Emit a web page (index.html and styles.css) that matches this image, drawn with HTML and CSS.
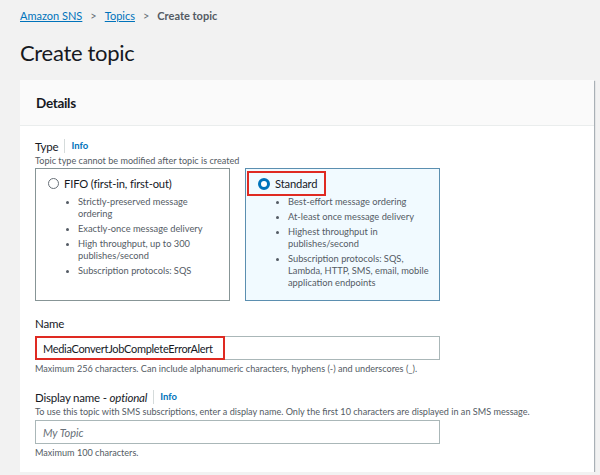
FILE: index.html
```html
<!DOCTYPE html>
<html lang="en">
  <head>
    <meta charset="UTF-8" />
    <title>Create topic</title>
    <link rel="stylesheet" href="styles.css">
  </head>
  <body>
    <nav class="breadcrumbs">
      <a href="#">Amazon SNS</a>
      <span class="sep">&gt;</span>
      <a href="#">Topics</a>
      <span class="sep">&gt;</span>
      <span class="current">Create topic</span>
    </nav>

    <h1 class="title">Create topic</h1>

    <section class="card">
      <header class="card-header">
        <h2>Details</h2>
      </header>

      <div class="card-body">
        <div class="field">
          <div class="label-row">
            <span class="label">Type</span>
            <a href="#" class="info">Info</a>
          </div>
          <div class="hint">Topic type cannot be modified after topic is created</div>

          <div class="tiles">
            <div class="tile">
              <div class="tile-head">
                <span class="radio"></span>
                <span class="tile-title">FIFO (first-in, first-out)</span>
              </div>
              <ul class="tile-list">
                <li>Strictly-preserved message ordering</li>
                <li>Exactly-once message delivery</li>
                <li>High throughput, up to 300 publishes/second</li>
                <li>Subscription protocols: SQS</li>
              </ul>
            </div>

            <div class="tile selected">
              <div class="tile-head highlight">
                <span class="radio checked"></span>
                <span class="tile-title">Standard</span>
              </div>
              <ul class="tile-list">
                <li>Best-effort message ordering</li>
                <li>At-least once message delivery</li>
                <li>Highest throughput in publishes/second</li>
                <li>Subscription protocols: SQS, Lambda, HTTP, SMS, email, mobile application endpoints</li>
              </ul>
            </div>
          </div>
        </div>

        <div class="field">
          <div class="label-row">
            <span class="label">Name</span>
          </div>
          <div class="input">
            <span class="value highlight">MediaConvertJobCompleteErrorAlert</span>
          </div>
          <div class="constraint">Maximum 256 characters. Can include alphanumeric characters, hyphens (-) and underscores (_).</div>
        </div>

        <div class="field">
          <div class="label-row">
            <span class="label">Display name - <i>optional</i></span>
            <a href="#" class="info">Info</a>
          </div>
          <div class="hint">To use this topic with SMS subscriptions, enter a display name. Only the first 10 characters are displayed in an SMS message.</div>
          <div class="input after-hint">
            <span class="placeholder">My Topic</span>
          </div>
          <div class="constraint">Maximum 100 characters.</div>
        </div>
      </div>
    </section>
  </body>
</html>
```

FILE: styles.css
```css
body {
  margin: 0;
  padding: 0 6px 0 20px;
  background: #f2f2f2;
  font-family: Lato, "Open Sans", sans-serif;
  color: #16191f;
}

.breadcrumbs {
  display: flex;
  align-items: center;
  gap: 8px;
  padding-top: 6px;
  height: 19px;
  font-size: 11px;
}

.breadcrumbs a {
  color: #0073bb;
}

.breadcrumbs .sep {
  color: #687078;
}

.breadcrumbs .current {
  color: #545b64;
  font-weight: 700;
}

.title {
  margin: 13px 0 0;
  height: 42px;
  font-size: 22px;
  letter-spacing: -0.3px;
  font-weight: 400;
  line-height: 30px;
}

.card {
  background: #fff;
  box-shadow: 1px 1px 1px rgba(0, 22, 44, 0.3);
  height: 392px;
}

.card-header {
  background: #fafafa;
  border-bottom: 1px solid #eaeded;
  height: 45px;
  display: flex;
  align-items: center;
  padding-left: 16px;
}

.card-header h2 {
  margin: 0;
  font-size: 13.5px;
  letter-spacing: -0.3px;
  font-weight: 700;
}

.card-body {
  padding: 13px 0 0 15px;
  width: 405px;
}

.field {
  margin-bottom: 15px;
}

.label-row {
  display: flex;
  align-items: center;
  height: 14px;
}

.label {
  font-size: 11.5px;
  letter-spacing: -0.2px;
}

.info {
  margin-left: 6px;
  padding-left: 6px;
  border-left: 1px solid #d5dbdb;
  line-height: 14px;
  font-size: 9.5px;
  font-weight: 700;
  color: #0073bb;
  text-decoration: none;
}

.hint,
.constraint {
  font-size: 9.1px;
  color: #545b64;
  line-height: 13px;
  white-space: nowrap;
}

.hint {
  margin-top: 1px;
}

.constraint {
  margin-top: 2px;
}

.tiles {
  display: flex;
  gap: 15px;
  margin-top: 1px;
}

.tile {
  flex: 1;
  height: 133px;
  box-sizing: border-box;
  border: 1px solid #879596;
  padding: 2px 10px 0 1px;
}

.tile.selected {
  background: #f1faff;
  border-color: #5b8fb0;
}

.tile-head {
  display: inline-flex;
  align-items: center;
  gap: 5px;
  height: 25px;
  padding: 0 7px 0 9px;
  box-sizing: border-box;
  border: 2px solid transparent;
}

.tile-head.highlight {
  border-color: #df2a22;
}

.radio {
  width: 9px;
  height: 9px;
  border: 1.5px solid #687078;
  border-radius: 50%;
  background: #fff;
}

.radio.checked {
  width: 6px;
  height: 6px;
  border: 3px solid #0073bb;
}

.tile-title {
  font-size: 11.2px;
  letter-spacing: -0.15px;
}

.tile-list {
  margin: 0;
  padding-left: 41px;
  font-size: 9.3px;
  line-height: 12px;
  color: #545b64;
}

.tile-list li {
  margin-bottom: 3px;
}

.tile-list li::marker {
  font-size: 8px;
}

.input {
  margin-top: 6px;
  height: 24px;
  box-sizing: border-box;
  border: 1px solid #aab7b8;
  display: flex;
  align-items: stretch;
}

.input.after-hint {
  margin-top: 2px;
}

.input .value {
  display: flex;
  align-items: center;
  padding: 0 10px 0 6px;
  margin: -1px 0 -1px -1px;
  font-size: 11px;
  letter-spacing: -0.3px;
}

.input .value.highlight {
  border: 2px solid #df2a22;
}

.placeholder {
  display: flex;
  align-items: center;
  padding-left: 7px;
  font-size: 11px;
  font-style: italic;
  color: #687078;
}
```
